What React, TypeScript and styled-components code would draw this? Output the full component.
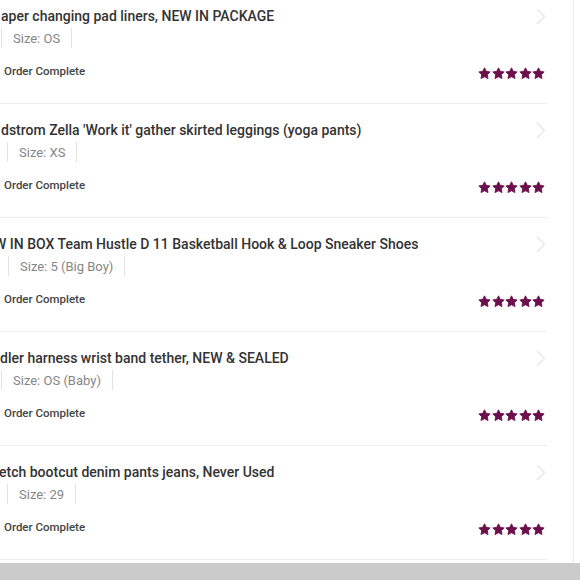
import React from "react";
import styled, { createGlobalStyle } from "styled-components";

interface IOrder {
  title: string;
  titleShift: number;
  size: string;
  metaShift: number;
}

const orders: IOrder[] = [
  { title: "aper changing pad liners, NEW IN PACKAGE", titleShift: 1, size: "OS", metaShift: 1 },
  { title: "dstrom Zella 'Work it' gather skirted leggings (yoga pants)", titleShift: 1, size: "XS", metaShift: 7 },
  { title: "W IN BOX Team Hustle D 11 Basketball Hook & Loop Sneaker Shoes", titleShift: -6, size: "5 (Big Boy)", metaShift: 8 },
  { title: "dler harness wrist band tether, NEW & SEALED", titleShift: 0, size: "OS (Baby)", metaShift: 1 },
  { title: "etch bootcut denim pants jeans, Never Used", titleShift: -1, size: "29", metaShift: 7 },
];

const GlobalStyle = createGlobalStyle`
  html, body {
    margin: 0;
    padding: 0;
    background: #ffffff;
  }
  body {
    font-family: Roboto, "Liberation Sans", sans-serif;
  }
`;

const Page = styled.div`
  width: 580px;
  height: 580px;
  display: flex;
  flex-direction: column;
  overflow: hidden;
  background: #ffffff;
`;

const Main = styled.div`
  flex: 1;
  display: flex;
  overflow: hidden;
`;

const Panel = styled.div`
  width: 573px;
  border-right: 1px solid #ececec;
  overflow: hidden;
`;

const List = styled.ul`
  list-style: none;
  margin: -10px 0 0 0;
  padding: 0;
  width: 547px;
`;

const Item = styled.li`
  border-bottom: 1px solid #ececec;
  padding: 18px 0 0 0;
  box-sizing: border-box;
  height: 114px;
  display: flex;
  flex-direction: column;
`;

const TitleRow = styled.div`
  display: flex;
  align-items: center;
  justify-content: space-between;
  height: 16px;
`;

const Title = styled.div<{ $shift: number }>`
  margin-left: ${(p) => p.$shift}px;
  font-size: 14px;
  font-weight: 500;
  color: #333333;
  white-space: nowrap;
  line-height: 16px;
`;

const Chevron = styled.svg`
  flex-shrink: 0;
  margin-right: 1px;
`;

const MetaRow = styled.div<{ $shift: number }>`
  display: flex;
  height: 20px;
  margin-top: 4px;
  padding-left: ${(p) => p.$shift}px;
`;

const Meta = styled.span`
  display: flex;
  align-items: center;
  padding: 0 11px;
  border-left: 1px solid #e2e2e2;
  border-right: 1px solid #e2e2e2;
  font-size: 13px;
  color: #868686;
`;

const FooterRow = styled.div`
  display: flex;
  justify-content: space-between;
  align-items: center;
  height: 20px;
  margin-top: 13px;
`;

const Status = styled.span`
  margin-left: 4px;
  font-size: 11.5px;
  font-weight: 500;
  color: #444444;
`;

const Stars = styled.div`
  display: flex;
  gap: 0.5px;
  margin-top: 4px;
  margin-right: 2px;
`;

const Bottom = styled.div`
  height: 17px;
  background: #cbcbcb;
`;

const Star = () => (
  <svg width="13" height="13" viewBox="0 0 24 24">
    <path
      d="M12 1.5L15.23 8.05L22.46 9.1L17.23 14.2L18.47 21.4L12 18L5.53 21.4L6.77 14.2L1.54 9.1L8.77 8.05Z"
      fill="#6c0f4d"
      stroke="#6c0f4d"
      strokeWidth="1.6"
      strokeLinejoin="round"
    />
  </svg>
);

const App = () => {
  return (
    <>
      <GlobalStyle />
      <Page>
        <Main>
          <Panel>
            <List>
              {orders.map((order) => (
                <Item key={order.title}>
                  <TitleRow>
                    <Title $shift={order.titleShift}>{order.title}</Title>
                    <Chevron width="10" height="17" viewBox="0 0 10 17">
                      <path d="M1 1l7.5 7.5L1 16" fill="none" stroke="#e6e6e6" strokeWidth="1.4" />
                    </Chevron>
                  </TitleRow>
                  <MetaRow $shift={order.metaShift}>
                    <Meta>Size: {order.size}</Meta>
                  </MetaRow>
                  <FooterRow>
                    <Status>Order Complete</Status>
                    <Stars>
                      {[0, 1, 2, 3, 4].map((i) => (
                        <Star key={i} />
                      ))}
                    </Stars>
                  </FooterRow>
                </Item>
              ))}
            </List>
          </Panel>
        </Main>
        <Bottom />
      </Page>
    </>
  );
};

export default App;
